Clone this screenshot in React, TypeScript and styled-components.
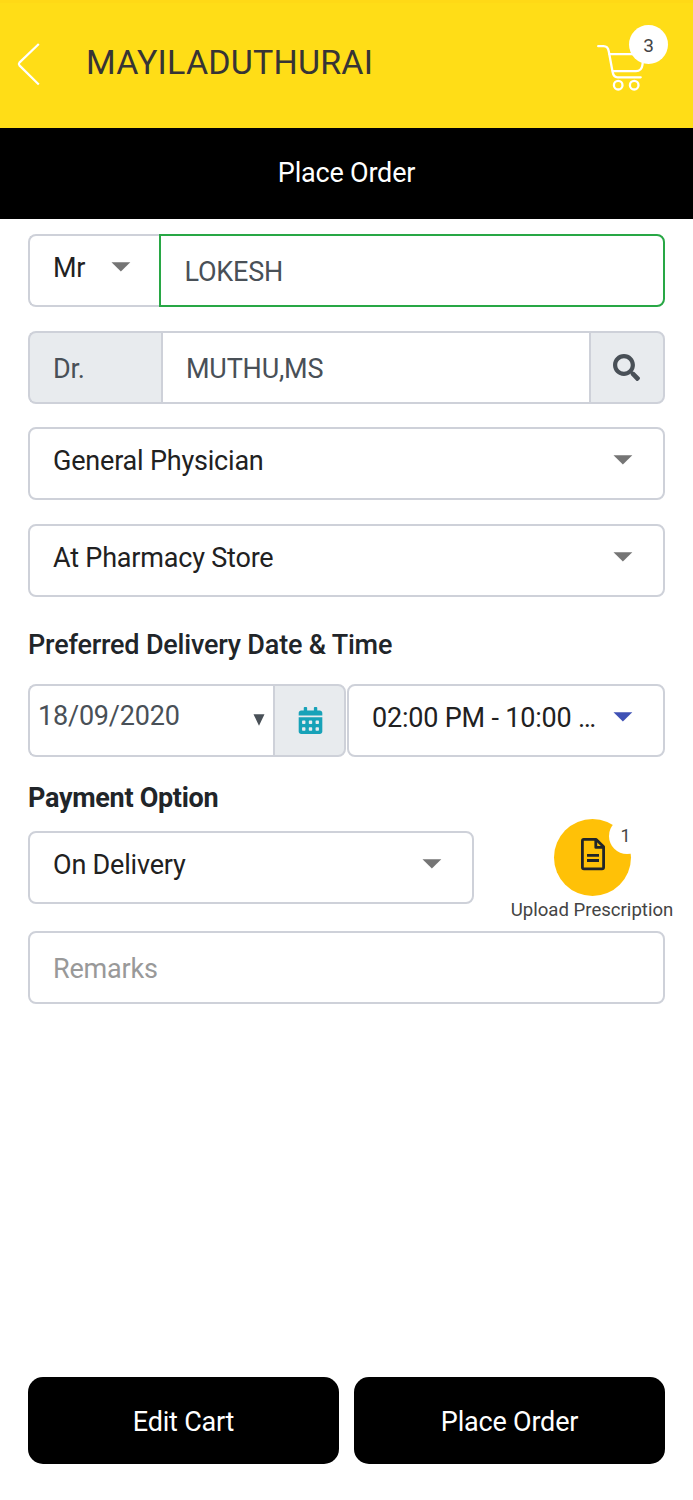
import React from "react";
import styled, { createGlobalStyle } from "styled-components";
import { FaCalendarAlt, FaSearch } from "react-icons/fa";

const GlobalStyle = createGlobalStyle`
  * { box-sizing: border-box; }
  body { margin: 0; background: #fff; }
`;

const border = "#ced1d9";

const Screen = styled.div`
  display: flex;
  flex-direction: column;
  height: 1500px;
  font-family: Roboto, "Liberation Sans", sans-serif;
  font-size: 27px;
  line-height: 32px;
  letter-spacing: -0.2px;
  color: #212529;
  white-space: nowrap;
`;

const Header = styled.header`
  display: flex;
  align-items: flex-start;
  height: 128px;
  padding: 0 25px 0 16px;
  background: #ffdd17;
  border-top: 3px solid #ffd916;
`;

const BackButton = styled.button`
  display: flex;
  width: 26px;
  margin-top: 39px;
  padding: 0;
  border: 0;
  background: none;
`;

const StoreName = styled.h1`
  flex: 1;
  margin: 39px 0 0 44px;
  font-size: 34px;
  line-height: 40px;
  font-weight: 400;
  letter-spacing: 0.2px;
  color: #373435;
`;

const CartButton = styled.div`
  position: relative;
  width: 71px;
  margin-top: 40px;
  svg { display: block; }
`;

const CartBadge = styled.span`
  position: absolute;
  top: -18px;
  right: 0;
  width: 39px;
  height: 39px;
  border-radius: 50%;
  background: #fff;
  color: #444;
  font-size: 19px;
  line-height: 41px;
  text-align: center;
`;

const PageTitle = styled.h2`
  display: flex;
  align-items: center;
  justify-content: center;
  height: 91px;
  margin: 0;
  padding-bottom: 1px;
  background: #000;
  color: #fff;
  font-size: 27px;
  font-weight: 400;
`;

const Form = styled.main`
  flex: 1;
  display: flex;
  flex-direction: column;
  padding: 15px 28px 0;
`;

const Row = styled.div<{ $top?: number }>`
  display: flex;
  height: 73px;
  margin-top: ${(p) => p.$top ?? 0}px;
`;

type FieldProps = {
  $width?: number;
  $lift?: number;
  $pad?: number;
  $right?: number;
  $join?: "left" | "right" | "both";
  $valid?: boolean;
  $addon?: boolean;
  $color?: string;
};

const radii = { left: "0 8px 8px 0", right: "8px 0 0 8px", both: "0" };

const Field = styled.div<FieldProps>`
  display: flex;
  align-items: center;
  justify-content: space-between;
  flex: ${(p) => (p.$width ? `0 0 ${p.$width}px` : "1")};
  padding: 3px ${(p) => p.$right ?? 30.5}px ${(p) => (p.$lift ?? 0) * 2}px ${(p) => p.$pad ?? 23}px;
  border: 2px solid ${(p) => (p.$valid ? "#28a745" : border)};
  ${(p) => (p.$join === "right" || p.$join === "both" ? "border-right-width: 0;" : "")}
  border-radius: ${(p) => (p.$join ? radii[p.$join] : "8px")};
  background: ${(p) => (p.$addon ? "#e8ebee" : "#fff")};
  color: ${(p) => p.$color ?? "#212121"};
`;

const AddonIcon = styled(Field)`
  justify-content: center;
  padding: 0 2px 0 0;
`;

const CalendarAddon = styled(AddonIcon)`
  margin-right: 1px;
  padding: 0 0 0 1px;
`;

const CaretShape = styled.svg<{ $color?: string }>`
  display: block;
  flex: none;
  margin-bottom: 2px;
  fill: ${(p) => p.$color ?? "#757575"};
`;

const DateCaretShape = styled(CaretShape)`
  margin: 7px 0 0;
`;

const SectionLabel = styled.h3<{ $top: number; $strong?: boolean }>`
  margin: ${(p) => p.$top}px 0 0;
  font-size: 27px;
  line-height: 32px;
  font-weight: ${(p) => (p.$strong ? 700 : 500)};
  letter-spacing: ${(p) => (p.$strong ? -0.3 : -0.2)}px;
`;

const PaymentRow = styled(Row)`
  justify-content: space-between;
`;

const Upload = styled.div`
  display: flex;
  flex-direction: column;
  align-items: center;
  width: 162px;
  margin: -12px -8px 0 0;
`;

const UploadButton = styled.div`
  position: relative;
  display: flex;
  flex: none;
  justify-content: center;
  width: 77px;
  height: 77px;
  padding: 18px 0 0 1px;
  border-radius: 50%;
  background: #ffc107;
`;

const UploadBadge = styled.span`
  position: absolute;
  top: -1px;
  left: 55px;
  width: 36px;
  height: 36px;
  padding-right: 2px;
  border-radius: 50%;
  background: #fff;
  color: #444;
  font-size: 18px;
  line-height: 36px;
  text-align: center;
`;

const UploadLabel = styled.span`
  font-size: 18.6px;
  line-height: 28px;
  letter-spacing: 0;
  color: #444;
`;

const Actions = styled.footer`
  display: flex;
  gap: 15px;
  padding: 0 28px 36px;
`;

const ActionButton = styled.button`
  flex: 1;
  height: 87px;
  padding: 2px 0 0;
  border: 0;
  border-radius: 15px;
  background: #000;
  color: #fff;
  font: 400 27px/32px Roboto, "Liberation Sans", sans-serif;
  letter-spacing: -0.2px;
`;

const Caret = ({ color }: { color?: string }) => (
  <CaretShape $color={color} width="20" height="10" viewBox="0 0 20 10">
    <path d="M0.5 0.3h18.8l-9.4 9.3Z" />
  </CaretShape>
);

const DateCaret = () => (
  <DateCaretShape $color="#495057" width="12" height="12" viewBox="0 0 12 12">
    <path d="M0.5 0.2h11L6 11.7Z" />
  </DateCaretShape>
);

const BackIcon = () => (
  <svg width="26" height="44" fill="none" stroke="#fff" strokeWidth="2.2">
    <path d="M22.8 2 3.4 20.6q-1.2 1.4 0 2.8L22.8 42.5" />
  </svg>
);

const CartIcon = () => (
  <svg width="52" height="50" fill="none" stroke="#fff" strokeWidth="2.3" strokeLinecap="round">
    <path d="M1.2 3.2h5.4q4.3 0 5.2 5.3l3.7 20q1 5.8 5 5.8h23.2" />
    <path d="M12.5 11.2H47l-1.6 11q-.8 6-6.4 6H16.2" />
    <circle cx="21.2" cy="42.2" r="4.3" />
    <circle cx="37.2" cy="42.2" r="4.3" />
  </svg>
);

const DocumentIcon = () => (
  <svg width="26" height="34" fill="none" stroke="#212529" strokeWidth="2.8" strokeLinejoin="round">
    <path d="M3.8 2.4h12.4l7.4 7.4v20.4q0 1.6-1.6 1.6H4q-1.6 0-1.6-1.6V4q0-1.6 1.4-1.6Z" />
    <path d="M15.8 2.6v7.8h7.6" />
    <path d="M7 18.3h12M7 23.5h12" />
  </svg>
);

export default function App() {
  return (
    <>
      <GlobalStyle />
      <Screen>
        <Header>
          <BackButton aria-label="Back">
            <BackIcon />
          </BackButton>
          <StoreName>MAYILADUTHURAI</StoreName>
          <CartButton>
            <CartIcon />
            <CartBadge>3</CartBadge>
          </CartButton>
        </Header>
        <PageTitle>Place Order</PageTitle>
        <Form>
          <Row>
            <Field $width={131} $join="right" $lift={4} $right={28}>
              Mr <Caret />
            </Field>
            <Field $join="left" $valid $pad={23.5} $color="#495057">LOKESH</Field>
          </Row>
          <Row $top={24}>
            <Field $width={133} $join="right" $addon $color="#495057">Dr.</Field>
            <Field $join="both" $color="#495057">MUTHU,MS</Field>
            <AddonIcon $width={76} $join="left" $addon $color="#495057">
              <FaSearch size={27} />
            </AddonIcon>
          </Row>
          <Row $top={23}>
            <Field $lift={4}>General Physician <Caret /></Field>
          </Row>
          <Row $top={24}>
            <Field $lift={4}>At Pharmacy Store <Caret /></Field>
          </Row>
          <SectionLabel $top={32}>Preferred Delivery Date &amp; Time</SectionLabel>
          <Row $top={23}>
            <Field $width={245} $join="right" $lift={6} $pad={8} $right={8} $color="#495057">
              18/09/2020 <DateCaret />
            </Field>
            <CalendarAddon $width={73} $join="left" $addon $color="#17a2b8">
              <FaCalendarAlt size={27} />
            </CalendarAddon>
            <Field $lift={4}>02:00 PM - 10:00 … <Caret color="#3f51b5" /></Field>
          </Row>
          <SectionLabel $top={25} $strong>Payment Option</SectionLabel>
          <PaymentRow $top={17}>
            <Field $width={446} $lift={4}>On Delivery <Caret /></Field>
            <Upload>
              <UploadButton>
                <DocumentIcon />
                <UploadBadge>1</UploadBadge>
              </UploadButton>
              <UploadLabel>Upload Prescription</UploadLabel>
            </Upload>
          </PaymentRow>
          <Row $top={27}>
            <Field $color="#999">Remarks</Field>
          </Row>
        </Form>
        <Actions>
          <ActionButton>Edit Cart</ActionButton>
          <ActionButton>Place Order</ActionButton>
        </Actions>
      </Screen>
    </>
  );
}
